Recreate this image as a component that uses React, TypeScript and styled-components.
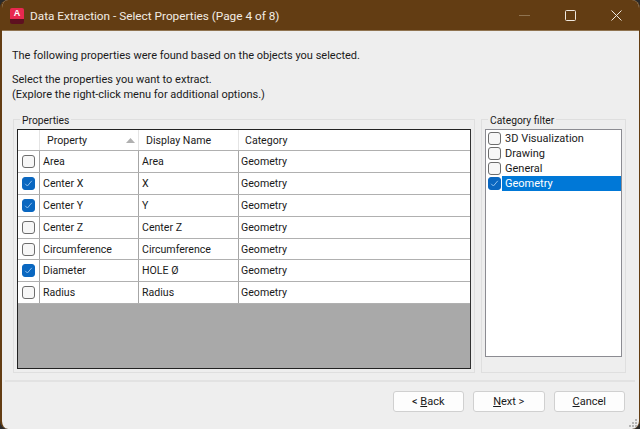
import React from 'react'
import styled, { createGlobalStyle } from 'styled-components'

const properties = [
  { name: 'Area', display: 'Area', checked: false },
  { name: 'Center X', display: 'X', checked: true },
  { name: 'Center Y', display: 'Y', checked: true },
  { name: 'Center Z', display: 'Center Z', checked: false },
  { name: 'Circumference', display: 'Circumference', checked: false },
  { name: 'Diameter', display: 'HOLE Ø', checked: true },
  { name: 'Radius', display: 'Radius', checked: false },
]

const categories = [
  { name: '3D Visualization', checked: false },
  { name: 'Drawing', checked: false },
  { name: 'General', checked: false },
  { name: 'Geometry', checked: true },
]

const GlobalStyle = createGlobalStyle`
  html, body {
    margin: 0;
    padding: 0;
    background: #2a2a2a;
  }
  body {
    font-family: Roboto, 'Open Sans', sans-serif;
  }
`

const Frame = styled.div`
  width: 640px;
  height: 429px;
  box-sizing: border-box;
  overflow: hidden;
  display: flex;
  flex-direction: column;
  background: #eeeeee;
  border-left: 2px solid #633d13;
  border-right: 1px solid #633d13;
  border-radius: 8px;
  color: #1a1a1a;
  font-size: 11px;
  position: relative;
`

const TitleBar = styled.div`
  height: 31px;
  flex: none;
  box-sizing: border-box;
  display: flex;
  align-items: center;
  background: #633d13;
  border-bottom: 1px solid #8f7350;
  margin: 0 -1px 0 -2px;
  padding: 1px 1px 0 10px;
  color: #f2ece4;
  font-size: 11.8px;
`

const AppIcon = styled.div`
  width: 14px;
  height: 16px;
  margin-right: 6px;
  border-radius: 2px;
  background: linear-gradient(#e8284f 0, #e8284f 68%, #5e1020 68%);
  color: #fff;
  font-size: 9px;
  font-weight: 700;
  line-height: 11px;
  text-align: center;
  font-family: 'Liberation Sans', sans-serif;
`

const TitleText = styled.span`
  flex: 1;
`

const WindowButton = styled.div`
  width: 46px;
  height: 30px;
  display: flex;
  align-items: center;
  justify-content: center;
`

const Body = styled.div`
  flex: 1;
  min-height: 0;
  display: flex;
  flex-direction: column;
  padding: 17px 13px 0 10px;
`

const Intro = styled.p`
  margin: 0;
  line-height: 15px;
`

const Instructions = styled(Intro)`
  margin-top: 9px;
`

const Panels = styled.div`
  display: flex;
  gap: 6px;
  margin-top: 12px;
  margin-left: 1px;
  height: 259px;
`

const Group = styled.fieldset<{ $width: number }>`
  width: ${(p) => p.$width}px;
  height: 100%;
  box-sizing: border-box;
  flex: none;
  margin: 0;
  padding: 3px;
  border: 1px solid #dfdfdf;
  min-width: 0;
  display: flex;
`

const GroupTitle = styled.legend`
  padding: 0 2px;
  margin-left: 3px;
  font-size: 10.3px;
  line-height: 13px;
  height: 10px;
`

const Table = styled.div`
  width: 100%;
  box-sizing: border-box;
  border: 1px solid #222;
  border-right-color: #333;
  background: #a9a9a9;
  margin-top: 2px;
  font-size: 10.6px;
`

const Row = styled.div<{ $header?: boolean }>`
  height: ${(p) => (p.$header ? 21 : 21.9)}px;
  box-sizing: border-box;
  display: grid;
  grid-template-columns: 22px 99px 100px 1fr;
  background: #fff;
  border-bottom: 1px solid #b0b0b0;
`

const Cell = styled.div`
  display: flex;
  align-items: center;
  padding-left: 3px;
  border-right: 1px solid #a6a6a6;
  white-space: nowrap;
  &:last-child {
    border-right: none;
    padding-left: 2px;
  }
`

const CheckCell = styled(Cell)`
  padding-left: 4px;
`

const HeadCell = styled(Cell)<{ $indent: number }>`
  &&& {
    padding-left: ${(p) => p.$indent}px;
  }
  border-right-color: #e4e4e4;
  position: relative;
`

const SortArrow = styled.svg`
  position: absolute;
  right: 3px;
  top: 8px;
`

const Box = styled.span<{ $checked: boolean }>`
  width: 13px;
  height: 13px;
  flex: none;
  display: flex;
  align-items: center;
  justify-content: center;
  border-radius: 3px;
  box-sizing: border-box;
  background: ${(p) => (p.$checked ? '#0a67c0' : '#f7f7f7')};
  border: 1px solid ${(p) => (p.$checked ? '#0a67c0' : '#6d6d6d')};
`

const List = styled.div`
  width: 100%;
  height: 228px;
  box-sizing: border-box;
  margin-top: 2px;
  padding-top: 1px;
  background: #fff;
  border: 1px solid #8c8c92;
`

const ListItem = styled.div`
  height: 15px;
  display: flex;
  align-items: center;
  gap: 1px;
  padding-left: 2px;
`

const ListLabel = styled.span<{ $selected: boolean }>`
  flex: 1;
  height: 15px;
  line-height: 15px;
  padding-left: 3px;
  background: ${(p) => (p.$selected ? '#0078d7' : 'transparent')};
  color: ${(p) => (p.$selected ? '#fff' : 'inherit')};
`

const Separator = styled.div`
  height: 2px;
  margin: 7px -9px 0 -7px;
  background: #e2e2e2;
`

const Footer = styled.div`
  display: flex;
  justify-content: flex-end;
  gap: 9px;
  margin-top: 9px;
  padding-right: 1px;
`

const WizardButton = styled.div`
  width: 71.5px;
  height: 21px;
  box-sizing: border-box;
  display: flex;
  align-items: center;
  justify-content: center;
  background: #fdfdfd;
  border: 1px solid #d0d0d0;
  border-radius: 3px;
  u {
    text-underline-offset: 1px;
  }
`

const Grip = styled.svg`
  position: absolute;
  right: 1px;
  bottom: 1px;
`

const Check = ({ color }: { color: string }) => (
  <svg width="9" height="9" viewBox="0 0 9 9" fill="none">
    <path d="M1.2 4.8 3.4 7 7.8 1.8" stroke={color} strokeWidth="1" />
  </svg>
)

const App: React.FC = () => {
  return (
    <>
      <GlobalStyle />
      <Frame>
        <TitleBar>
          <AppIcon>A</AppIcon>
          <TitleText>Data Extraction - Select Properties (Page 4 of 8)</TitleText>
          <WindowButton>
            <svg width="11" height="2" viewBox="0 0 11 2">
              <rect width="11" height="1" fill="#8f7350" />
            </svg>
          </WindowButton>
          <WindowButton>
            <svg width="11" height="11" viewBox="0 0 11 11" fill="none">
              <rect x="0.5" y="0.5" width="10" height="10" rx="1" stroke="#efe8df" />
            </svg>
          </WindowButton>
          <WindowButton>
            <svg width="11" height="11" viewBox="0 0 11 11" fill="none">
              <path d="M.5.5l10 10M10.5.5l-10 10" stroke="#efe8df" />
            </svg>
          </WindowButton>
        </TitleBar>
        <Body>
          <Intro>The following properties were found based on the objects you selected.</Intro>
          <Instructions>
            Select the properties you want to extract.
            <br />
            (Explore the right-click menu for additional options.)
          </Instructions>
          <Panels>
            <Group $width={462}>
              <GroupTitle>Properties</GroupTitle>
              <Table>
                <Row $header>
                  <HeadCell $indent={0} />
                  <HeadCell $indent={7}>
                    Property
                    <SortArrow width="9" height="5" viewBox="0 0 9 5">
                      <path d="M0 5 4.5 0 9 5z" fill="#b0b0b0" />
                    </SortArrow>
                  </HeadCell>
                  <HeadCell $indent={7}>Display Name</HeadCell>
                  <HeadCell $indent={6}>Category</HeadCell>
                </Row>
                {properties.map((item) => (
                  <Row key={item.name}>
                    <CheckCell>
                      <Box $checked={item.checked}>{item.checked && <Check color="#8fc0ee" />}</Box>
                    </CheckCell>
                    <Cell>{item.name}</Cell>
                    <Cell>{item.display}</Cell>
                    <Cell>Geometry</Cell>
                  </Row>
                ))}
              </Table>
            </Group>
            <Group $width={145}>
              <GroupTitle>Category filter</GroupTitle>
              <List>
                {categories.map((item) => (
                  <ListItem key={item.name}>
                    <Box $checked={item.checked}>{item.checked && <Check color="#8fc0ee" />}</Box>
                    <ListLabel $selected={item.checked}>{item.name}</ListLabel>
                  </ListItem>
                ))}
              </List>
            </Group>
          </Panels>
          <Separator />
          <Footer>
            <WizardButton>
              &lt;&nbsp;<u>B</u>ack
            </WizardButton>
            <WizardButton>
              <u>N</u>ext &gt;
            </WizardButton>
            <WizardButton>
              <u>C</u>ancel
            </WizardButton>
          </Footer>
        </Body>
        <Grip width="10" height="10" viewBox="0 0 10 10" fill="#b5b5b5">
          <rect x="7" y="1" width="2" height="2" />
          <rect x="4" y="4" width="2" height="2" />
          <rect x="7" y="4" width="2" height="2" />
          <rect x="1" y="7" width="2" height="2" />
          <rect x="4" y="7" width="2" height="2" />
          <rect x="7" y="7" width="2" height="2" />
        </Grip>
      </Frame>
    </>
  )
}

export default App
